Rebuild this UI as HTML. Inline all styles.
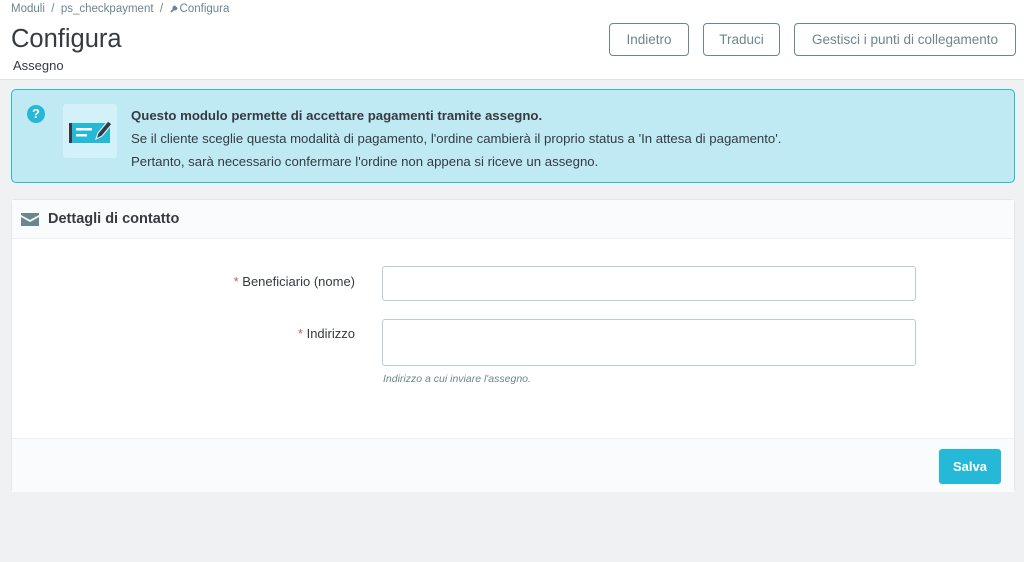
<!DOCTYPE html>
<html><head><meta charset="utf-8"><style>
body{margin:0;width:1024px;height:562px;background:#eff1f2;font-family:"Liberation Sans",Arial,sans-serif;color:#363a41;position:relative;overflow:hidden}
.hdr{position:absolute;left:0;top:0;width:1024px;height:79px;background:#fff;border-bottom:1px solid #dfe3e6}
.bc{position:absolute;left:11px;top:3px;font-size:11.5px;color:#6c868e}
h1{position:absolute;left:11px;top:25px;margin:0;font-weight:normal;font-size:25.5px;color:#363a41}
.sub{position:absolute;left:13px;top:58px;font-size:13px}
.btn{position:absolute;top:23px;height:33px;border:1px solid #6c868e;border-radius:4px;box-sizing:border-box;font-size:13.5px;color:#6c868e;text-align:center;line-height:31px;background:#fff}
.alert{position:absolute;left:11px;top:89px;width:1004px;height:94px;box-sizing:border-box;background:#bfeaf3;border:1px solid #25b9d7;border-radius:5px}
.q{position:absolute;left:15px;top:15px;width:18px;height:18px;border-radius:50%;background:#25b9d7;color:#fff;font-weight:bold;font-size:13px;text-align:center;line-height:18px}
.ico{position:absolute;left:51px;top:14px;width:54px;height:54px;background:#d2f1f8;border-radius:3px}
.at{position:absolute;left:119px;top:14px;font-size:13.2px;line-height:23px;white-space:nowrap}
.panel{position:absolute;left:11px;top:199px;width:1004px;height:293px;background:#fff;border:1px solid #e3e7ea;box-sizing:border-box;border-radius:4px}
.ph{height:38px;background:#fafbfc;border-bottom:1px solid #eef1f3;font-weight:bold;font-size:14.5px;line-height:38px;padding-left:36px;position:relative}
.lbl{position:absolute;font-size:13px;text-align:right}
.lbl b{color:#c05c67;font-weight:normal}
.inp{position:absolute;left:370px;width:534px;border:1px solid #bbcdd2;border-radius:3px;box-sizing:border-box;background:#fff}
.help{position:absolute;left:371px;top:173px;font-size:10.5px;font-style:italic;color:#6c868e}
.pf{position:absolute;left:0;top:238px;width:1002px;height:53px;background:#fafbfc;border-top:1px solid #eef1f3}
.save{position:absolute;left:927px;top:10px;width:62px;height:35px;background:#25b9d7;border-radius:3px;color:#fff;font-weight:bold;font-size:13px;text-align:center;line-height:35px}
</style></head><body>
<div class="hdr">
<div class="bc">Moduli &nbsp;/&nbsp; ps_checkpayment &nbsp;/&nbsp; <svg width="10" height="10" viewBox="0 0 10 10" style="vertical-align:-1px"><path d="M1 9 L6 4" stroke="#6c868e" stroke-width="1.8"/><path d="M5 2.5 A2.5 2.5 0 1 0 7.5 5 L6.5 4 L6 3.5 Z" fill="#6c868e"/></svg>Configura</div>
<h1>Configura</h1>
<div class="sub">Assegno</div>
<div class="btn" style="left:609px;width:80px">Indietro</div>
<div class="btn" style="left:703px;width:77px">Traduci</div>
<div class="btn" style="left:794px;width:222px">Gestisci i punti di collegamento</div>
</div>
<div class="alert">
<div class="q">?</div>
<div class="ico"><svg width="54" height="54" viewBox="0 0 54 54">
<rect x="6" y="19" width="3" height="20" fill="#363a41"/>
<rect x="9" y="19" width="38" height="20" fill="#25b9d7"/>
<rect x="13" y="24" width="16" height="2.5" fill="#fff"/><rect x="13" y="30" width="11" height="2.5" fill="#fff"/>
<path d="M33 35 L35 29 L45 17 L49 20 L39 32 Z" fill="#363a41" stroke="#d2f1f8" stroke-width="1.2"/>
</svg></div>
<div class="at"><b>Questo modulo permette di accettare pagamenti tramite assegno.</b><br>Se il cliente sceglie questa modalità di pagamento, l'ordine cambierà il proprio status a 'In attesa di pagamento'.<br>Pertanto, sarà necessario confermare l'ordine non appena si riceve un assegno.</div>
</div>
<div class="panel">
<div class="ph"><svg style="position:absolute;left:9px;top:13px" width="18" height="13" viewBox="0 0 18 13"><path d="M0 0H18V2L9 7 0 2Z" fill="#6c868e"/><path d="M0 4L9 9 18 4V13H0Z" fill="#6c868e"/></svg>Dettagli di contatto</div>
<div class="lbl" style="left:150px;width:193px;top:74px"><b>*</b> Beneficiario (nome)</div>
<div class="inp" style="top:66px;height:35px"></div>
<div class="lbl" style="left:150px;width:193px;top:126px"><b>*</b> Indirizzo</div>
<div class="inp" style="top:119px;height:47px"></div>
<div class="help">Indirizzo a cui inviare l'assegno.</div>
<div class="pf"><div class="save">Salva</div></div>
</div>
</body></html>
